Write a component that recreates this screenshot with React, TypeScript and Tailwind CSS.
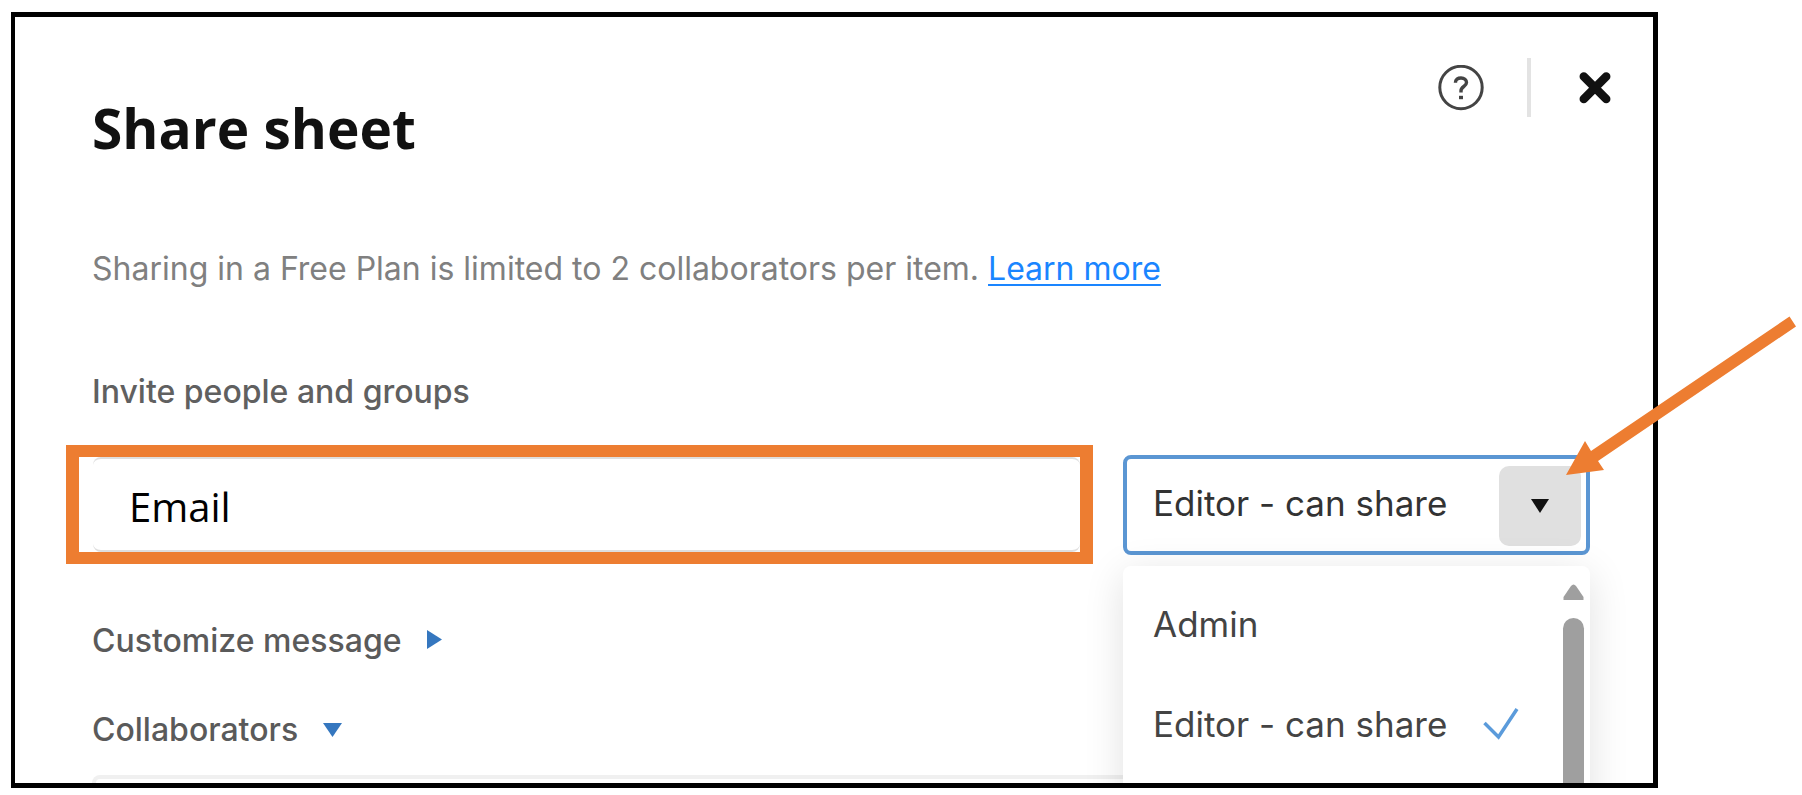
import { useState } from "react";

const roles = ["Admin", "Editor - can share"];

function HelpIcon() {
  return (
    <svg viewBox="0 0 46 46" className="size-[46px]" fill="none" stroke="#444" aria-hidden="true">
      <circle cx="23" cy="22.500" r="21.200" strokeWidth="3" />
      <path d="M17.500 17.800v-.6c0-2.600 2.200-4.200 5.500-4.200s5.500 1.800 5.500 4.500c0 4.200-5.500 3.800-5.500 8.200v1.900" strokeWidth="3.400" />
      <path d="M23 30.800v3.400" strokeWidth="4" />
    </svg>
  );
}

function CloseIcon() {
  return (
    <svg viewBox="0 0 32 32" className="size-8" stroke="#111" strokeWidth="8.500" strokeLinecap="round" aria-hidden="true">
      <path d="M4.800 4.500 27.200 26.900M27.200 4.500 4.800 26.900" />
    </svg>
  );
}

function ShareHeader() {
  return (
    <header className="flex items-start justify-between pt-[41px]">
      <h1 className="mt-9 font-['Open_Sans',sans-serif] text-[55px] leading-[68px] font-bold text-[#111]">
        Share sheet
      </h1>
      <div className="-mr-[21px] flex items-center">
        <button type="button" aria-label="Help">
          <HelpIcon />
        </button>
        <div className="mr-12 ml-[43px] h-[59px] w-1 bg-[#e3e3e3]" />
        <button type="button" aria-label="Close">
          <CloseIcon />
        </button>
      </div>
    </header>
  );
}

function RolePicker() {
  const [role, setRole] = useState("Editor - can share");
  return (
    <div className="relative mt-[10px] w-[467px] shrink-0">
      <select
        aria-label="Role"
        value={role}
        onChange={(e) => setRole(e.target.value)}
        className="block h-[100px] w-full appearance-none rounded-lg border-4 border-[#5b96d3] bg-white pr-24 pb-1 pl-[26px] text-[35px] text-[#333] outline-none"
      >
        {roles.map((r) => (
          <option key={r}>{r}</option>
        ))}
      </select>
      <div className="pointer-events-none absolute top-[11px] right-[9px] flex h-20 w-[82px] items-center justify-center rounded-[10px] bg-[#e0e0e0]">
        <svg viewBox="0 0 18 14" className="h-[14px] w-[18px]" aria-hidden="true">
          <path d="M0 0h18L9 14z" fill="#111" />
        </svg>
      </div>
      <div className="absolute top-[111px] left-0 flex h-80 w-full rounded-lg bg-white shadow-[0_8px_40px_rgba(0,0,0,0.12)]">
        <div role="listbox" aria-label="Roles" className="grow pt-3">
          {roles.map((r) => (
            <button
              key={r}
              type="button"
              role="option"
              aria-selected={r === role}
              onClick={() => setRole(r)}
              className="flex h-[100px] w-full items-center gap-9 pb-2 pl-[30px] text-left text-[35px] text-[#444]"
            >
              {r}
              {r === role && (
                <svg viewBox="0 0 36 32" className="h-8 w-9" fill="none" stroke="#5b9bdb" strokeWidth="3.500" aria-hidden="true">
                  <path d="M1.500 15 15.500 29 34 1" />
                </svg>
              )}
            </button>
          ))}
        </div>
        <div className="mr-[6px] flex w-[21px] shrink-0 flex-col gap-[18px] pt-[18px]">
          <svg viewBox="0 0 21 16" className="h-4 w-[21px] shrink-0" aria-hidden="true">
            <path d="M.5 16v-3L8 2q2.500-3.200 5 0l7.500 11v3z" fill="#9f9f9f" />
          </svg>
          <div className="grow rounded-t-full bg-[#9f9f9f]" />
        </div>
      </div>
    </div>
  );
}

export default function App() {
  return (
    <main className="relative bg-white pt-3 pr-36 pb-[7px] pl-[11px] font-['Inter',sans-serif] [font-optical-sizing:none]">
      <div className="overflow-hidden border-y-5 border-r-5 border-l-4 border-black bg-white pr-[63px] pl-[77px]">
        <ShareHeader />
        <p className="mt-[87px] text-[32px] leading-10 text-[#808080]">
          Sharing in a Free Plan is limited to 2 collaborators per item.{" "}
          <a href="#learn" className="text-[#1a85ff] underline decoration-2 underline-offset-4">
            Learn more
          </a>
        </p>
        <label htmlFor="email" className="mt-[83px] block text-[32px] leading-10 font-medium text-[#606060]">
          Invite people and groups
        </label>
        <div className="mt-[33px] -ml-[26px] flex items-start gap-[30px]">
          <div className="h-[119px] grow border-x-13 border-y-12 border-[#ed7d31] bg-white pl-[14px]">
            <input
              id="email"
              type="text"
              defaultValue="Email"
              className="block h-full w-full rounded-lg border-y-2 border-[#dedede] pt-1 pl-9 font-['Open_Sans',sans-serif] text-[40px] text-black outline-none"
            />
          </div>
          <RolePicker />
        </div>
        <button type="button" className="mt-[57px] flex items-center gap-[25px] text-[32px] leading-10 font-medium text-[#5a5a5a]">
          Customize message
          <svg viewBox="0 0 15 19" className="mb-1 h-[19px] w-[15px]" aria-hidden="true">
            <path d="M0 0v19l15-9.500z" fill="#3577bf" />
          </svg>
        </button>
        <button type="button" className="mt-[49px] flex items-center gap-[25px] text-[32px] leading-10 font-medium text-[#5a5a5a]">
          Collaborators
          <svg viewBox="0 0 19 14" className="h-[14px] w-[19px]" aria-hidden="true">
            <path d="M0 0h19l-9.500 14z" fill="#3577bf" />
          </svg>
        </button>
        <div className="mt-[25px] h-2 rounded-t-lg border-4 border-b-0 border-[#f0f0f0]" />
      </div>
      <svg
        viewBox="0 0 232 160"
        className="pointer-events-none absolute top-[316px] right-[5px] h-[160px] w-[232px]"
        aria-hidden="true"
      >
        <path d="M224.500 .5 231 10.500 33 145l6 9-38 5 19-34 6 10z" fill="#ed7d31" />
      </svg>
    </main>
  );
}
